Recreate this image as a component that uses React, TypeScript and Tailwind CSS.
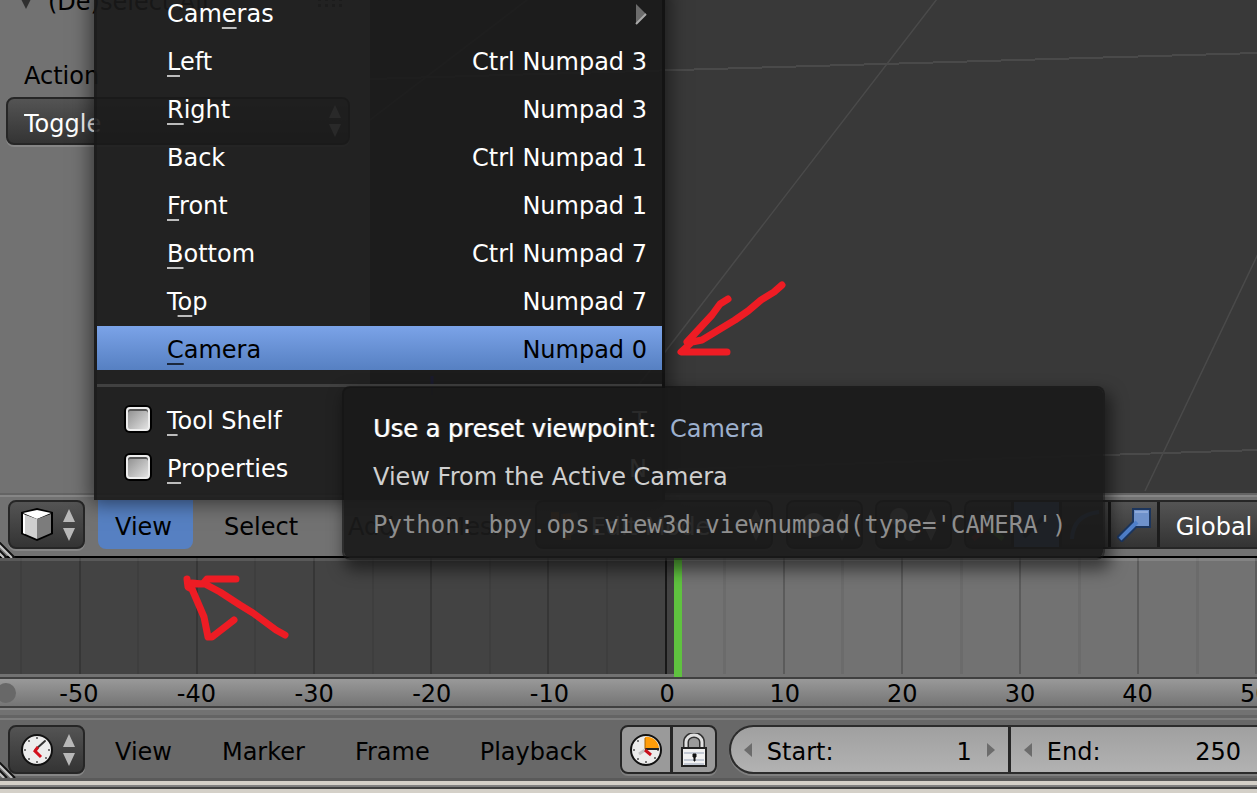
import React from "react";

type MenuEntry = { label: string; key: number; shortcut?: string; submenu?: boolean; active?: boolean };

const viewItems: MenuEntry[] = [
  { label: "Cameras", key: 3, submenu: true },
  { label: "Left", key: 0, shortcut: "Ctrl Numpad 3" },
  { label: "Right", key: 0, shortcut: "Numpad 3" },
  { label: "Back", key: -1, shortcut: "Ctrl Numpad 1" },
  { label: "Front", key: 0, shortcut: "Numpad 1" },
  { label: "Bottom", key: 0, shortcut: "Ctrl Numpad 7" },
  { label: "Top", key: 1, shortcut: "Numpad 7" },
  { label: "Camera", key: 0, shortcut: "Numpad 0", active: true },
];

const toggles = [
  { label: "Tool Shelf", shortcut: "T" },
  { label: "Properties", shortcut: "N" },
];

const frames = [-50, -40, -30, -20, -10, 0, 10, 20, 30, 40, 50];

const darkBox =
  "rounded-lg border-2 border-[#262626] bg-linear-to-b from-[#545454] to-[#343434] shadow-[0_2px_0_#868686]";

function Mnemonic({ text, at }: { text: string; at: number }) {
  if (at < 0) return <span>{text}</span>;
  return (
    <span>
      {text.slice(0, at)}
      <span className="underline decoration-current/70 decoration-2 underline-offset-[5px]">{text[at]}</span>
      {text.slice(at + 1)}
    </span>
  );
}

function UpDown({ className = "shrink-0" }: { className?: string }) {
  return (
    <svg className={className} width="14" height="32" viewBox="0 0 14 32" fill="#b8b8b8" aria-hidden="true">
      <path d="M7 0 L13 13 H1 Z M1 19 H13 L7 32 Z" />
    </svg>
  );
}

function Corner() {
  return (
    <svg className="absolute bottom-0 left-0" width="16" height="16" viewBox="0 0 16 16" aria-hidden="true">
      <path d="M-1 0 L15 16 M-1 8 L7 16" stroke="#111" strokeWidth="2" />
      <path d="M-1 3 L12 16 M-1 11 L4 16" stroke="#c4c4c4" strokeWidth="2" />
    </svg>
  );
}

function CubeIcon() {
  return (
    <svg width="34" height="34" viewBox="0 0 34 34" aria-hidden="true">
      <path d="M17 0 L33 4 V26 L17 33 L1 26 V4 Z" fill="#000" />
      <path d="M17 2 L31 5 L17 11 L3 5 Z" fill="#fff" />
      <path d="M3 6 L17 11 V31 L3 25 Z" fill="#cfcfcf" />
      <path d="M3 6 L5 7 V26 L3 25 Z" fill="#fff" />
      <path d="M17 11 L31 6 V25 L17 31 Z" fill="#7c7c7c" />
    </svg>
  );
}

function ClockIcon({ wedge = false }: { wedge?: boolean }) {
  return (
    <svg width="34" height="34" viewBox="0 0 34 34" aria-hidden="true">
      <circle cx="17" cy="17" r="15" fill="#ececec" stroke="#111" strokeWidth="2" />
      <g fill="#777">
        <rect x="16" y="4" width="2" height="2" /><rect x="28" y="16" width="2" height="2" />
        <rect x="16" y="28" width="2" height="2" /><rect x="4" y="16" width="2" height="2" />
        <rect x="8" y="7" width="2" height="2" /><rect x="24" y="7" width="2" height="2" />
        <rect x="8" y="25" width="2" height="2" /><rect x="25" y="24" width="2" height="2" />
      </g>
      {wedge ? (
        <>
          <path d="M16 16 V4 A12 12 0 0 1 30 16 Z" fill="#ff9d0a" />
          <path d="M16 16 H30" stroke="#222" strokeWidth="2" />
          <path d="M16 5 V16" stroke="#a86400" strokeWidth="1" />
          <path d="M16 17 L10 21" stroke="#c4c4c4" strokeWidth="3" />
          <path d="M16 17 L22 22" stroke="#c8101c" strokeWidth="3" />
        </>
      ) : (
        <>
          <path d="M15 17 L25 8" stroke="#333" strokeWidth="2" />
          <path d="M18 14 L15 18 L21 24" stroke="#d3101c" strokeWidth="3" fill="none" />
        </>
      )}
    </svg>
  );
}

function LockIcon() {
  return (
    <svg width="28" height="34" viewBox="0 0 28 34" aria-hidden="true">
      <path d="M6 17 V9 A8 7 0 0 1 22 9 V17" fill="none" stroke="#333" strokeWidth="6" />
      <path d="M6 17 V9 A8 7 0 0 1 22 9 V17" fill="none" stroke="#e2e2e2" strokeWidth="3" />
      <rect x="2" y="15" width="24" height="18" fill="#f2f2f2" stroke="#222" strokeWidth="2" />
      <path d="M4 20 H24 M4 27 H24 M4 31 H24" stroke="#c3c9d4" strokeWidth="2" />
      <path d="M13 21 H16 V24 H15 V28 H14 V24 H13 Z" fill="#111" stroke="#111" />
    </svg>
  );
}

function EditorPicker({ label, children }: { label: string; children: React.ReactNode }) {
  return (
    <button aria-label={label} className={`flex h-[49px] w-[77px] shrink-0 items-center gap-2 pl-2.5 ${darkBox}`}>
      {children}
      <UpDown />
    </button>
  );
}

function MenuButton({ children }: { children: React.ReactNode }) {
  return <button className="flex h-[49px] items-center px-[19px] pt-1">{children}</button>;
}

function ToolPanel() {
  return (
    <aside className="w-[370px] shrink-0 bg-[#727272]">
      <div className="-mt-3 flex h-7 items-center pr-[26px] pl-[18px]">
        <svg width="16" height="14" viewBox="0 0 16 14" aria-hidden="true">
          <path d="M1 0 H15 L8 14 Z" fill="#303030" />
        </svg>
        <span className="ml-3.5 grow">(De)select All</span>
        <svg width="26" height="12" viewBox="0 0 26 12" fill="#333" aria-hidden="true">
          {[0, 7, 14, 21].map((x) => (
            <path key={x} d={`M${x} 2h3v3h-3z M${x} 8h3v3h-3z`} />
          ))}
        </svg>
      </div>
      <label htmlFor="action" className="mt-11 block pl-6 leading-8">
        Action
      </label>
      <div className="relative mt-[5px] mr-5 ml-1.5">
        <select id="action" className={`h-12 w-full appearance-none pt-1.5 pl-4 text-white ${darkBox}`}>
          <option>Toggle</option>
        </select>
        <UpDown className="absolute top-2 right-2" />
      </div>
    </aside>
  );
}

function ViewMenu() {
  return (
    <div className="absolute bottom-[58px] left-[94px] z-10 w-[571px] border-x-[3px] border-r-[#111]/80 border-l-[#161616]/40 bg-[#191919]/90 pb-[11px] text-white shadow-[0_0_18px_4px_rgba(0,0,0,0.5)]">
      <div className="flex flex-col gap-1">
        {viewItems.map((item) => (
          <button
            key={item.label}
            className={
              item.active
                ? "flex h-11 items-center justify-between bg-linear-to-b from-[#7ba3e8] to-[#5680c2] pt-1 pr-[15px] pl-[70px] text-black"
                : "flex h-11 items-center justify-between pt-1 pr-[15px] pl-[70px]"
            }
          >
            <Mnemonic text={item.label} at={item.key} />
            {item.submenu ? (
              <svg width="12" height="22" viewBox="0 0 12 22" aria-hidden="true">
                <path d="M1 1 L11 11 L1 21 Z" fill="#6c6c6c" />
                <path d="M1 21 L11 11" stroke="#aaa" strokeWidth="2" />
              </svg>
            ) : (
              <span>{item.shortcut}</span>
            )}
          </button>
        ))}
      </div>
      <hr className="mt-3.5 mb-2.5 border-t-[3px] border-[#414141]" />
      <div className="flex flex-col gap-1">
        {toggles.map((item) => (
          <label key={item.label} className="flex h-11 items-center pr-[15px] pl-[29px]">
            <input
              type="checkbox"
              className="h-6 w-6 appearance-none rounded-sm border-2 border-[#ededed] bg-linear-to-br from-[#8f8f8f] to-[#e2e2e2] shadow-[0_0_0_2px_#000,inset_0_2px_0_#555]"
            />
            <span className="ml-[17px] grow pt-1">
              <Mnemonic text={item.label} at={0} />
            </span>
            <span className="pt-1">{item.shortcut}</span>
          </label>
        ))}
      </div>
    </div>
  );
}

function Tooltip() {
  return (
    <div
      role="tooltip"
      className="absolute -bottom-0.5 left-[342px] z-20 h-[174px] w-[763px] rounded-lg border-2 border-[#111]/70 bg-[#1a1a1a]/93 bg-clip-padding pt-[17px] pl-[29px] leading-[48px] whitespace-nowrap text-[#cfcfcf] shadow-[4px_8px_16px_2px_rgba(0,0,0,0.5)]"
    >
      <p className="text-white">
        <span className="[text-shadow:1px_0_0_#ffffff99]">Use a preset viewpoint:</span>
        <span className="ml-3.5 text-[#9db0cd]">Camera</span>
      </p>
      <p>View From the Active Camera</p>
      <p className="font-['DejaVu_Sans_Mono',monospace] text-[#8e8e8e]">
        Python: bpy.ops.view3d.viewnumpad(type='CAMERA')
      </p>
    </div>
  );
}

function ViewportHeader() {
  return (
    <header className="relative h-[65px] shrink-0 border-t-2 border-[#646464] bg-[#727272]">
      <div className="h-full overflow-hidden border-t-2 border-b-2 border-t-[#868686] border-b-black">
        <div className="flex items-start pt-[3px] pl-2">
          <EditorPicker label="Editor type: 3D View">
            <CubeIcon />
          </EditorPicker>
          <div className="ml-[13px] flex gap-3">
            <button className="flex h-[49px] w-[95px] items-center rounded-b-lg bg-[#5680c2] pt-1 pl-[17px]">View</button>
            <MenuButton>Select</MenuButton>
            <MenuButton>Add</MenuButton>
            <MenuButton>Mesh</MenuButton>
          </div>
          <button className={`ml-2 flex h-[49px] w-[238px] shrink-0 items-center pr-2 pl-3 text-white ${darkBox}`}>
            <svg width="34" height="34" viewBox="0 0 34 34" aria-hidden="true">
              <path d="M12 6 L28 4 L32 22 L18 30 L10 22 Z" fill="#7a7a7a" />
              <path d="M2 4h8v8h-8z M14 6h8v8h-8z M14 24h8v8h-8z" fill="#c07a3a" />
            </svg>
            <span className="ml-2 grow pt-1 text-left">Edit Mode</span>
            <UpDown />
          </button>
          <button aria-label="Viewport shading" className={`ml-[13px] flex h-[49px] w-[77px] shrink-0 items-center justify-between px-3 ${darkBox}`}>
            <svg width="28" height="28" viewBox="0 0 28 28" aria-hidden="true"><circle cx="14" cy="14" r="12" fill="#bdbdbd" /></svg>
            <UpDown />
          </button>
          <button aria-label="Pivot point" className={`ml-3 flex h-[49px] w-[77px] shrink-0 items-center justify-between px-3 ${darkBox}`}>
            <svg width="28" height="34" viewBox="0 0 28 34" aria-hidden="true">
              <circle cx="10" cy="9" r="9" fill="#bdbdbd" />
              <circle cx="21" cy="27" r="6" fill="#9a9a9a" />
              <circle cx="15" cy="18" r="3" fill="#3b6cb8" />
            </svg>
            <UpDown />
          </button>
          <div className="ml-3 flex h-[49px] grow divide-x-[3px] divide-[#1c1c1c] overflow-hidden rounded-l-lg border-2 border-r-0 border-[#262626] bg-linear-to-b from-[#545454] to-[#343434]">
            <button aria-label="Manipulator" className="w-[48px] shrink-0">
              <svg className="mx-auto" width="36" height="36" viewBox="0 0 36 36" fill="none" strokeWidth="5" aria-hidden="true">
                <path d="M18 4 V20" stroke="#3b6cb8" /><path d="M18 20 L3 32" stroke="#b33" /><path d="M18 20 L33 32" stroke="#6a3" />
              </svg>
            </button>
            <button aria-label="Translate" className="w-[48px] shrink-0 bg-[#5680c2]">
              <svg className="mx-auto" width="32" height="32" viewBox="0 0 32 32" aria-hidden="true"><path d="M4 28 L26 6" stroke="#1d3a66" strokeWidth="4" /></svg>
            </button>
            <button aria-label="Rotate" className="w-[49px] shrink-0">
              <svg className="mx-auto" width="32" height="32" viewBox="0 0 32 32" aria-hidden="true"><path d="M3 30 Q4 6 30 3" fill="none" stroke="#4f78b5" strokeWidth="4" /></svg>
            </button>
            <button aria-label="Scale" className="w-[49px] shrink-0">
              <svg className="mx-auto" width="34" height="34" viewBox="0 0 34 34" aria-hidden="true">
                <path d="M2 32 L20 14" stroke="#1c355c" strokeWidth="8" />
                <rect x="16" y="1" width="17" height="18" fill="#6f92cb" stroke="#1c355c" strokeWidth="2" />
                <path d="M3 31 L20 14" stroke="#4f7fc9" strokeWidth="4" />
                <path d="M18 4 H31" stroke="#8eaada" strokeWidth="2" />
              </svg>
            </button>
            <button className="grow pt-1 pl-4 text-left text-white">Global</button>
          </div>
        </div>
        <Corner />
      </div>
      <ViewMenu />
      <Tooltip />
    </header>
  );
}

function Timeline() {
  return (
    <section aria-label="Timeline" className="shrink-0">
      <div className="relative flex h-[119px] overflow-hidden bg-[#434343]">
        <div className="-mr-[57px] ml-5 flex grow">
          {frames.map((f) => (
            <React.Fragment key={f}>
              <div
                className={
                  f > 0
                    ? "flex-1 border-l-[3px] border-[#6b6b6b] bg-[#727272]"
                    : "flex-1 border-l-2 border-[#3e3e3e]"
                }
              />
              <div
                className={
                  f > 0
                    ? "flex-1 border-l-2 border-[#5b5b5b] bg-[#727272]"
                    : f === 0
                      ? "flex flex-1 border-l-2 border-[#181818]"
                      : "flex-1 border-l-2 border-[#363636]"
                }
              >
                {f === 0 && (
                  <>
                    <div className="w-[7px]" />
                    <div className="relative z-[1] w-2 bg-[#5fc23f]" />
                    <div className="grow bg-[#727272]" />
                  </>
                )}
              </div>
            </React.Fragment>
          ))}
        </div>
        <div className="absolute inset-x-0 top-0 h-[3px] bg-white/12" />
        <div className="absolute inset-x-0 bottom-0 h-[3px] bg-[#727272]" />
      </div>
      <div className="relative flex h-[31px] overflow-hidden border-y-2 border-[#404040] bg-linear-to-b from-[#999999] to-[#757575]">
        <div className="absolute top-1 -left-1 h-5 w-5 rounded-full bg-[#686868]" />
        <div className="-mr-[57px] ml-[20px] flex grow leading-[31px]">
          {frames.map((f) => (
            <span key={f} className="flex-1 text-center">
              {f}
            </span>
          ))}
        </div>
      </div>
      <div className="h-2.5 border-t-2 border-b-3 border-t-[#868686] border-b-[#646464] bg-[#727272]" />
    </section>
  );
}

function FrameField({ label, value, last = false }: { label: string; value: string; last?: boolean }) {
  return (
    <label
      className={
        last
          ? "flex min-w-0 grow items-center border-l-[3px] border-[#262626] pr-4 pl-3"
          : "flex w-[277px] shrink-0 items-center pr-3 pl-3"
      }
    >
      <svg className="shrink-0" width="10" height="14" viewBox="0 0 10 14" aria-hidden="true">
        <path d="M9 0 V14 L1 7 Z" fill="#6c6c6c" />
      </svg>
      <span className="ml-3.5 pt-1">{label}</span>
      <input
        size={1}
        defaultValue={value}
        className={
          last ? "w-0 min-w-0 grow bg-transparent pt-1 text-right" : "w-0 min-w-0 grow bg-transparent pt-1 pr-3.5 text-right"
        }
      />
      {!last && (
        <svg className="shrink-0" width="10" height="14" viewBox="0 0 10 14" aria-hidden="true">
          <path d="M1 0 V14 L9 7 Z" fill="#6c6c6c" />
        </svg>
      )}
    </label>
  );
}

function TimelineHeader() {
  return (
    <footer className="relative h-[63px] shrink-0 overflow-hidden border-t-2 border-b-3 border-t-[#7d7d7d] border-b-[#5a5a5a] bg-[#686868]">
      <div className="flex items-start pt-[5px] pl-2">
        <EditorPicker label="Editor type: Timeline">
          <ClockIcon />
        </EditorPicker>
        <div className="ml-[11px] flex gap-3">
          {["View", "Marker", "Frame", "Playback"].map((m) => (
            <MenuButton key={m}>{m}</MenuButton>
          ))}
        </div>
        <div className="ml-3.5 flex h-[49px] w-[97px] shrink-0 rounded-lg border-2 border-[#262626] bg-[#9a9a9a] shadow-[0_2px_0_#808080]">
          <button aria-label="Use preview range" className="flex grow items-center justify-center border-r-[3px] border-[#262626]">
            <ClockIcon wedge />
          </button>
          <button aria-label="Lock time cursor" className="flex grow items-center justify-center">
            <LockIcon />
          </button>
        </div>
        <div className="ml-3 flex h-[49px] min-w-0 grow rounded-l-full border-2 border-r-0 border-[#2c2c2c] bg-linear-to-b from-[#a0a0a0] to-[#b2b2b2] shadow-[0_2px_0_#808080]">
          <FrameField label="Start:" value="1" />
          <FrameField label="End:" value="250" last />
        </div>
      </div>
      <Corner />
    </footer>
  );
}

export default function App() {
  return (
    <div className="relative flex h-screen flex-col overflow-hidden bg-white pb-0.5 font-['DejaVu_Sans',sans-serif] text-2xl text-black">
      <main className="flex min-h-0 grow overflow-hidden bg-[#393939]">
        <ToolPanel />
        <svg className="h-full min-w-0 grow" stroke="#4a4a4a" fill="none" strokeWidth="2" aria-hidden="true">
          <g shapeRendering="crispEdges">
            <path d="M0 79 L307 70 L887 53 M0 480 L735 455 L887 450" />
          </g>
          <path d="M0 120 L170 -10 M240 420 L295 352 L567 -1 M775 491 L888 254" strokeWidth="1.5" />
          <path d="M62 376 V395" stroke="#2020d0" strokeWidth="3" />
        </svg>
      </main>
      <ViewportHeader />
      <Timeline />
      <TimelineHeader />
      <div className="h-3 shrink-0 border-y-4 border-[#d4d0c8] bg-[#808080]">
        <div className="h-0.5" />
        <div className="h-0.5 bg-[#404040]" />
      </div>
      <svg
        className="pointer-events-none absolute top-0 left-0 z-30"
        width="800"
        height="650"
        viewBox="0 0 800 650"
        fill="none"
        stroke="#ee1c24"
        strokeWidth="7"
        strokeLinecap="round"
        strokeLinejoin="round"
        aria-hidden="true"
      >
        <path d="M782 285 L774 292 L761 300 L748 311 L735 320 L702 340 L692 342 L681 352 H727" />
        <path d="M728 299 L720 304 L712 315 L687 342" />
        <path d="M187 579 L188 587 L192 589 L204 617 L208 637 H212 L234 620" />
        <path d="M236 579 H207 L203 584 L192 583 M195 584 L205 584 L220 592 L240 605 L253 613 L276 630 L285 635" />
      </svg>
    </div>
  );
}
